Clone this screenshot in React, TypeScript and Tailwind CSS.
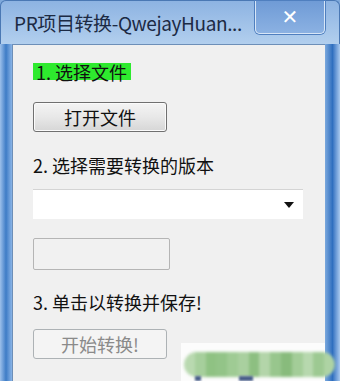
import React from "react";

const cjk = { fontFamily: '"Microsoft YaHei", "Noto Sans CJK SC", "Noto Sans", sans-serif' };

export default function App() {
  const blocks = [
    "#b9d9b0", "#a6cf9c", "#8fc283", "#93c488", "#9fcb94", "#a9d09f", "#8dbf81", "#b3d5a9", "#98c68d", "#88bb7c", "#a3cd98", "#b7d8ae", "#9dc992", "#aed3a4",
  ];
  return (
    <div
      className="relative w-[340px] h-[381px] overflow-hidden flex flex-col bg-gradient-to-b from-[#7fa9db] via-[#a9c8ec] to-[#6f9fd6]"
      style={cjk}
    >
      {/* Title bar */}
      <div className="h-[44px] flex items-start shrink-0 bg-gradient-to-b from-[#8db3e2] to-[#b2cfee] border-t border-l border-r border-[#4a78b4] rounded-t-[6px]">
        <div className="pl-[13px] pt-[10px] text-[19px] leading-[24px] text-[#1c2a44] tracking-[-0.4px] whitespace-nowrap">
          PR项目转换-QwejayHuan...
        </div>
        <div className="ml-auto mr-[14px] w-[70px] h-[33px] rounded-b-[5px] border border-t-0 border-[#d8e6f7] bg-gradient-to-b from-[#6f9bd6] to-[#8bb1e2] flex items-center justify-center shadow-[0_0_0_1px_#4f7fbf]">
          <span className="text-white text-[20px] font-bold leading-none" style={{ fontFamily: '"DejaVu Sans", sans-serif' }}>✕</span>
        </div>
      </div>
      {/* Body with frame */}
      <div className="flex-1 flex">
        <div className="w-[12px] shrink-0 bg-gradient-to-r from-[#9cc0ea] via-[#3d7cc6] to-[#8ab4e6]" />
        <div className="flex-1 bg-[#f0f0f0] border-t border-l border-[#6d8fb8] flex flex-col pl-[20px]">
          <div className="mt-[18px] self-start bg-[#2eea2e] pl-[3px] pr-[4px] h-[17px] flex items-center text-[18px] leading-none text-[#111]">
            1. 选择文件
          </div>
          <div className="mt-[22px] w-[134px] h-[30px] rounded-[3px] border border-[#707070] bg-gradient-to-b from-[#f4f4f4] via-[#e8e8e8] to-[#d6d6d6] flex items-center justify-center text-[18px] text-[#111] shadow-[inset_0_0_0_1px_#fbfbfb]">
            打开文件
          </div>
          <div className="mt-[22px] h-[22px] flex items-center text-[18px] leading-none text-[#111]">
            2. 选择需要转换的版本
          </div>
          <div className="mt-[13px] w-[270px] h-[30px] bg-white border-t border-[#d4d4d4] flex items-center justify-end pr-[9px]">
            <div className="w-0 h-0 border-l-[5px] border-r-[5px] border-t-[6px] border-l-transparent border-r-transparent border-t-[#111]" />
          </div>
          <div className="mt-[19px] w-[137px] h-[32px] rounded-[2px] border border-[#b5b5b5] bg-[#f1f1f1]" />
          <div className="mt-[21px] h-[22px] flex items-center text-[18px] leading-none text-[#111]">
            3. 单击以转换并保存!
          </div>
          <div className="mt-[16px] w-[134px] h-[30px] rounded-[3px] border border-[#adb2b5] bg-[#f4f4f4] flex items-center justify-center text-[18px] text-[#8a8a8a]">
            开始转换!
          </div>
        </div>
        <div className="w-[15px] shrink-0 bg-gradient-to-r from-[#7aa8dd] via-[#2f6fbf] to-[#a9c9ee]" />
      </div>
      {/* Watermark overlay */}
      <div className="absolute left-[181px] top-[343px] w-[144px] h-[38px] bg-white/80" />
      <div className="absolute left-[184px] top-[352px] w-[151px] h-[25px] rounded-full overflow-hidden flex blur-[1.5px]">
        {blocks.map((c, i) => (
          <div key={i} className="flex-1 h-full" style={{ background: c }} />
        ))}
      </div>
      <div className="absolute left-[195px] top-[376px] flex gap-[38px]">
        <div className="w-[6px] h-[5px] bg-[#4a5f8a] blur-[1px]" />
        <div className="w-[14px] h-[5px] bg-[#4a5f8a] blur-[1px]" />
      </div>
    </div>
  );
}
